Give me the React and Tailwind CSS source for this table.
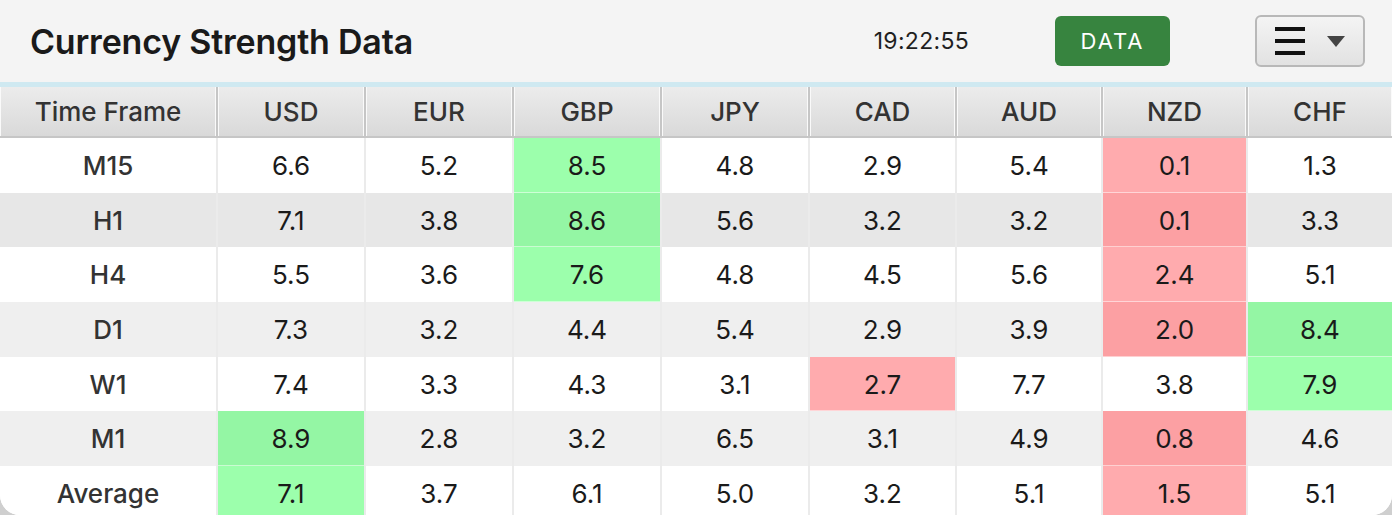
import React from 'react';

const currencies = ['USD', 'EUR', 'GBP', 'JPY', 'CAD', 'AUD', 'NZD', 'CHF'];

// g = strong (green), r = weak (red)
const rows = [
  { tf: 'M15', bg: 'bg-white', values: ['6.6', '5.2', '8.5', '4.8', '2.9', '5.4', '0.1', '1.3'], marks: { 2: 'g', 6: 'r' } },
  { tf: 'H1', bg: 'bg-[#e7e7e7]', values: ['7.1', '3.8', '8.6', '5.6', '3.2', '3.2', '0.1', '3.3'], marks: { 2: 'g', 6: 'r' } },
  { tf: 'H4', bg: 'bg-white', values: ['5.5', '3.6', '7.6', '4.8', '4.5', '5.6', '2.4', '5.1'], marks: { 2: 'g', 6: 'r' } },
  { tf: 'D1', bg: 'bg-[#efefef]', values: ['7.3', '3.2', '4.4', '5.4', '2.9', '3.9', '2.0', '8.4'], marks: { 6: 'r', 7: 'g' } },
  { tf: 'W1', bg: 'bg-white', values: ['7.4', '3.3', '4.3', '3.1', '2.7', '7.7', '3.8', '7.9'], marks: { 4: 'r', 7: 'g' } },
  { tf: 'M1', bg: 'bg-[#efefef]', values: ['8.9', '2.8', '3.2', '6.5', '3.1', '4.9', '0.8', '4.6'], marks: { 0: 'g', 6: 'r' } },
  { tf: 'Average', bg: 'bg-white', values: ['7.1', '3.7', '6.1', '5.0', '3.2', '5.1', '1.5', '5.1'], marks: { 0: 'g', 6: 'r' } }
];

const cellColor = (mark, shaded) => {
  if (mark === 'g') return shaded ? 'bg-[#94f6a4]' : 'bg-[#9cffac]';
  if (mark === 'r') return shaded ? 'bg-[#fca0a3]' : 'bg-[#ffabae]';
  return '';
};

const App = () => {
  return (
    <div className="h-[515px] w-[1392px] bg-[#cfcfcf] font-['Inter','Liberation_Sans',sans-serif]">
      <div className="h-full overflow-hidden rounded-b-[20px] bg-white">
        {/* Title bar */}
        <div className="flex h-[82px] items-center bg-[#f4f4f4] pl-[30px] pr-[27px]">
          <h1 className="flex-1 text-[34px] font-semibold tracking-[-0.2px] text-[#1a1a1a]">
            Currency Strength Data
          </h1>
          <span className="text-[23px] tracking-[0.3px] text-[#1f1f1f]">19:22:55</span>
          <button className="ml-[86px] flex h-[50px] w-[115px] items-center justify-center rounded-[6px] bg-[#37843f] text-[22px] tracking-[2px] text-white">
            DATA
          </button>
          <button className="ml-[85px] flex h-[52px] w-[110px] items-center justify-center gap-[22px] rounded-[6px] border-2 border-[#b8b8b8] bg-linear-to-b from-[#f4f4f4] to-[#e2e2e2]">
            <span className="flex flex-col gap-[8px]">
              <span className="block h-[4px] w-[30px] bg-[#111]" />
              <span className="block h-[4px] w-[30px] bg-[#111]" />
              <span className="block h-[4px] w-[30px] bg-[#111]" />
            </span>
            <svg width="18" height="11" viewBox="0 0 18 11">
              <path d="M0 0 L18 0 L9 11 Z" fill="#444" />
            </svg>
          </button>
        </div>
        <div className="h-[5px] bg-[#cfe9f1]" />

        {/* Table */}
        <div className="grid grid-cols-[218px_148px_148px_148px_148px_147px_146px_145px_144px]">
          {['Time Frame', ...currencies].map((h, i) => (
            <div
              key={h}
              className={`flex h-[51px] items-center justify-center border-b-2 border-[#c6c6c6] bg-linear-to-b from-[#ececec] to-[#d9d9d9] text-[26px] font-medium text-[#333] shadow-[inset_1px_0_0_#fafafa,inset_-1px_0_0_#fafafa] ${i < 8 ? 'border-r-2' : ''}`}
            >
              {h}
            </div>
          ))}

          {rows.map((row) => {
            const shaded = row.bg !== 'bg-white';
            return (
              <React.Fragment key={row.tf}>
                <div className={`flex h-[54.7px] items-center justify-center border-r-2 border-[#ebebeb] text-[26px] font-medium text-[#333] ${row.bg}`}>
                  {row.tf}
                </div>
                {row.values.map((v, i) => {
                  const mark = row.marks[i];
                  return (
                    <div
                      key={i}
                      className={`flex h-[54.7px] items-center justify-center text-[26px] text-[#1a1a1a] ${i < 7 ? 'border-r-2 border-[#ebebeb]' : ''} ${mark ? cellColor(mark, shaded) + ' shadow-[inset_0_-1px_0_#ffffff80]' : row.bg}`}
                    >
                      {v}
                    </div>
                  );
                })}
              </React.Fragment>
            );
          })}
        </div>
      </div>
    </div>
  );
};

export default App;
